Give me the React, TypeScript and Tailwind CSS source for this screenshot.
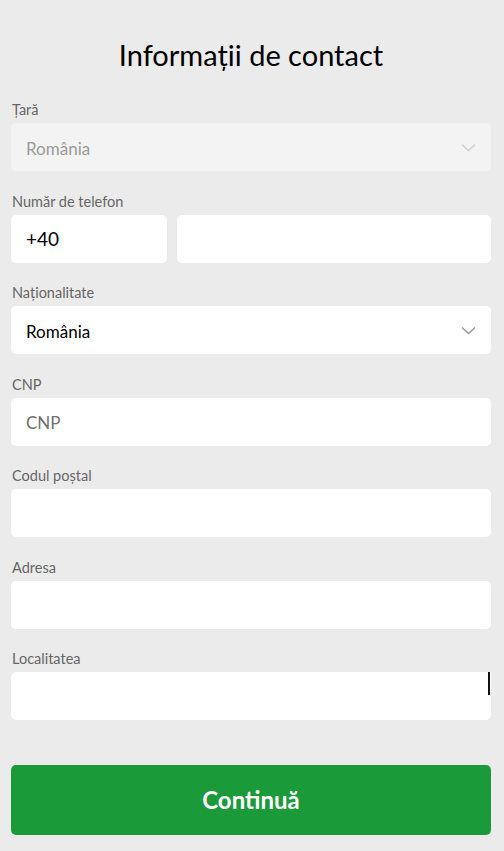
import React from "react";

function Chevron({ color }: { color: string }) {
  return (
    <svg width="15" height="9" viewBox="0 0 15 9" className="shrink-0">
      <polyline points="1,1.5 7.5,7.5 14,1.5" fill="none" stroke={color} strokeWidth="1.5" />
    </svg>
  );
}

function Label({ children }: { children: React.ReactNode }) {
  return <div className="h-5 text-[14.5px] leading-5 text-[#666666] pl-px">{children}</div>;
}

export default function App() {
  return (
    <div
      className="min-h-[851px] w-[504px] bg-[#ebebeb] pl-[11px] pr-[13px] pt-[37px] pb-4"
      style={{ fontFamily: "Lato, 'Noto Sans', sans-serif" }}
    >
      <h1 className="h-9 text-center text-[29px] leading-9 text-black">Informații de contact</h1>

      <div className="mt-[27px] flex flex-col gap-[20.5px]">
        <div>
          <Label>Țară</Label>
          <div className="mt-[3px] flex h-12 items-center justify-between rounded-[5px] bg-[#f3f3f3] pl-[15px] pr-[15px]">
            <span className="pt-[3px] text-[17px] text-[#9a9a9a]">România</span>
            <Chevron color="#c9d2c9" />
          </div>
        </div>

        <div>
          <Label>Număr de telefon</Label>
          <div className="mt-[3px] flex gap-[10px]">
            <div className="flex h-12 w-[156px] items-center rounded-[5px] bg-white pl-[15px]">
              <span className="pt-[2px] text-[19px] text-black">+40</span>
            </div>
            <div className="h-12 flex-1 rounded-[5px] bg-white" />
          </div>
        </div>

        <div>
          <Label>Naționalitate</Label>
          <div className="mt-[3px] flex h-12 items-center justify-between rounded-[5px] bg-white pl-[15px] pr-[15px]">
            <span className="pt-[3px] text-[17px] text-black">România</span>
            <Chevron color="#9a9a9a" />
          </div>
        </div>

        <div>
          <Label>CNP</Label>
          <div className="mt-[3px] flex h-12 items-center rounded-[5px] bg-white pl-[15px]">
            <span className="pt-[3px] text-[17px] text-[#6f6f6f]">CNP</span>
          </div>
        </div>

        <div>
          <Label>Codul poștal</Label>
          <div className="mt-[3px] h-12 rounded-[5px] bg-white" />
        </div>

        <div>
          <Label>Adresa</Label>
          <div className="mt-[3px] h-12 rounded-[5px] bg-white" />
        </div>

        <div>
          <Label>Localitatea</Label>
          <div className="relative mt-[3px] h-12 rounded-[5px] rounded-tr-none bg-white">
            <span className="absolute right-[1px] top-0 h-[23px] w-[2px] bg-[#111111]" />
          </div>
        </div>
      </div>

      <button className="mt-[45px] flex h-[70px] w-full items-center justify-center rounded-[5px] bg-[#1b9a3a] text-[24px] font-bold text-white">
        Continuă
      </button>
    </div>
  );
}
